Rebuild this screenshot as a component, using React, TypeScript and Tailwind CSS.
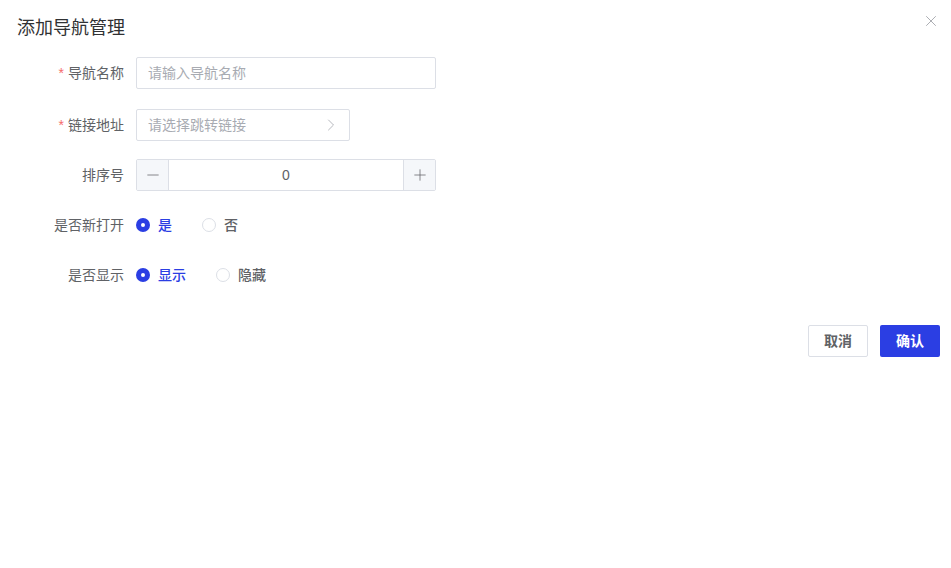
import { X, ChevronRight, Minus, Plus } from 'lucide-react'

const font = { fontFamily: '"Liberation Sans", "Noto Sans CJK SC", sans-serif' }

function Label({ children, required }: { children: React.ReactNode; required?: boolean }) {
  return (
    <div className="w-[124px] shrink-0 pr-0 text-right text-[14px] text-[#606266] leading-[32px]">
      {required && <span className="text-[#f56c6c] mr-[4px]">*</span>}
      {children}
    </div>
  )
}

function Radio({ label, checked }: { label: string; checked?: boolean }) {
  return (
    <label className="flex items-center gap-[8px] text-[14px] font-medium mr-[30px]">
      {checked ? (
        <span className="w-[14px] h-[14px] rounded-full bg-[#2b3ee3] flex items-center justify-center">
          <span className="w-[4px] h-[4px] rounded-full bg-white" />
        </span>
      ) : (
        <span className="w-[14px] h-[14px] rounded-full border border-[#dcdfe6] bg-white" />
      )}
      <span className={checked ? 'text-[#2b3ee3]' : 'text-[#606266]'}>{label}</span>
    </label>
  )
}

export default function App() {
  return (
    <div className="w-[951px] h-[568px] bg-white relative" style={font}>
      <div className="flex items-center justify-between pl-[17px] pr-[11px] pt-[16px]">
        <h1 className="text-[18px] text-[#303133] leading-[24px]">添加导航管理</h1>
        <X size={18} strokeWidth={1} className="text-[#909399] -mt-[15px]" />
      </div>

      <div className="mt-[17px] flex flex-col">
        <div className="flex items-center gap-[12px] h-[32px]">
          <Label required>导航名称</Label>
          <div className="w-[300px] h-[32px] border border-[#dcdfe6] rounded-[2px] px-[11px] text-[14px] text-[#a8abb2] leading-[30px]">
            请输入导航名称
          </div>
        </div>

        <div className="flex items-center gap-[12px] h-[32px] mt-[20px]">
          <Label required>链接地址</Label>
          <div className="w-[214px] h-[32px] border border-[#dcdfe6] rounded-[2px] pl-[11px] pr-[8px] flex items-center justify-between text-[14px] text-[#a8abb2]">
            <span>请选择跳转链接</span>
            <ChevronRight size={20} strokeWidth={1} className="text-[#a8abb2]" />
          </div>
        </div>

        <div className="flex items-center gap-[12px] h-[32px] mt-[18px]">
          <Label>排序号</Label>
          <div className="w-[300px] h-[32px] border border-[#dcdfe6] rounded-[2px] flex">
            <div className="w-[32px] h-full bg-[#f5f7fa] border-r border-[#dcdfe6] flex items-center justify-center">
              <Minus size={18} strokeWidth={1} className="text-[#606266]" />
            </div>
            <div className="flex-1 text-center text-[14px] text-[#606266] leading-[30px]">0</div>
            <div className="w-[32px] h-full bg-[#f5f7fa] border-l border-[#dcdfe6] flex items-center justify-center">
              <Plus size={18} strokeWidth={1} className="text-[#606266]" />
            </div>
          </div>
        </div>

        <div className="flex items-center gap-[12px] h-[32px] mt-[18px]">
          <Label>是否新打开</Label>
          <div className="flex items-center">
            <Radio label="是" checked />
            <Radio label="否" />
          </div>
        </div>

        <div className="flex items-center gap-[12px] h-[32px] mt-[18px]">
          <Label>是否显示</Label>
          <div className="flex items-center">
            <Radio label="显示" checked />
            <Radio label="隐藏" />
          </div>
        </div>
      </div>

      <div className="flex justify-end gap-[12px] pr-[11px] mt-[34px]">
        <button className="w-[60px] h-[32px] border border-[#dcdfe6] rounded-[2px] bg-white text-[14px] font-bold text-[#606266]">
          取消
        </button>
        <button className="w-[60px] h-[32px] rounded-[2px] bg-[#2b3ee3] text-[14px] font-bold text-white">
          确认
        </button>
      </div>
    </div>
  )
}
